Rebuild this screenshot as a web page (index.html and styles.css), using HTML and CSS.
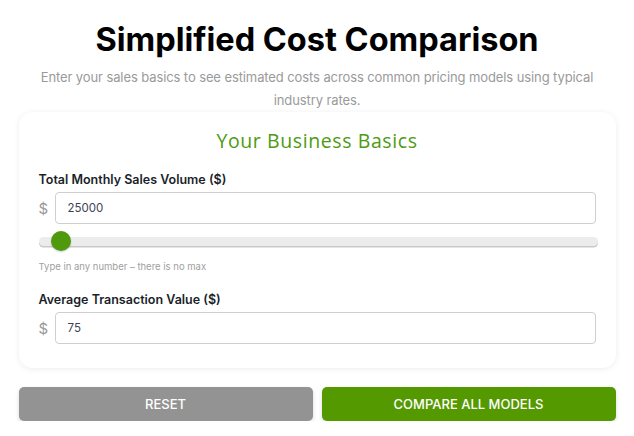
FILE: index.html
```html
<!DOCTYPE html>
<html>
<head>
<meta charset="utf-8">
<link rel="stylesheet" href="styles.css">
</head>
<body>
<div class="page">
  <h1 class="title">Simplified Cost Comparison</h1>
  <p class="subtitle">Enter your sales basics to see estimated costs across common pricing models using typical industry rates.</p>
  <div class="card">
    <h2 class="card-title">Your Business Basics</h2>
    <div class="field">
      <label class="label">Total Monthly Sales Volume ($)</label>
      <div class="input-row">
        <span class="dollar">$</span>
        <div class="input">25000</div>
      </div>
      <div class="slider">
        <div class="track"></div>
        <div class="thumb"></div>
      </div>
      <div class="hint">Type in any number – there is no max</div>
    </div>
    <div class="field field-2">
      <label class="label">Average Transaction Value ($)</label>
      <div class="input-row">
        <span class="dollar">$</span>
        <div class="input">75</div>
      </div>
    </div>
  </div>
  <div class="buttons">
    <button class="btn btn-reset">RESET</button>
    <button class="btn btn-compare">COMPARE ALL MODELS</button>
  </div>
</div>
</body>
</html>
```
FILE: styles.css
```css
* { box-sizing: border-box; }
html, body { margin: 0; padding: 0; background: #fff; }
body { font-family: Inter, "Noto Sans", sans-serif; }
.page {
  width: 597px;
  margin: 0 auto;
  padding-top: 18px;
}
.title {
  margin: 0;
  text-align: center;
  font-family: Inter, sans-serif;
  font-weight: 700;
  font-size: 32.5px;
  line-height: 44px;
  color: #000;
}
.subtitle {
  margin: 4px 0 0;
  text-align: center;
  font-size: 13px;
  line-height: 23px;
  letter-spacing: -0.1px;
  color: #9a9a9a;
}
.card {
  margin-top: 0;
  background: #fff;
  border-radius: 14px;
  box-shadow: 0 1px 6px rgba(0,0,0,0.08);
  padding: 16px 20px 24px;
}
.card-title {
  margin: 0;
  text-align: center;
  font-family: "Open Sans", sans-serif;
  font-weight: 400;
  font-size: 19.5px;
  line-height: 26px;
  letter-spacing: 0.6px;
  color: #4e9a12;
}
.field { margin-top: 18px; }
.field-2 { margin-top: 20px; }
.label {
  display: block;
  font-weight: 600;
  font-size: 12.5px;
  line-height: 16px;
  color: #1b1f2a;
}
.input-row {
  display: flex;
  align-items: center;
  gap: 7px;
  margin-top: 4px;
}
.dollar {
  width: 9px;
  font-size: 15px;
  color: #999;
}
.input {
  flex: 1;
  height: 32px;
  border: 1px solid #cfcfcf;
  border-radius: 4px;
  padding: 0 12px;
  display: flex;
  align-items: center;
  font-size: 11.5px;
  color: #3b4456;
}
.slider {
  position: relative;
  height: 20px;
  margin-top: 7px;
}
.track {
  position: absolute;
  left: 0; right: -2px; top: 6px;
  height: 9px;
  border-radius: 5px;
  background: #ececec;
  box-shadow: 0 1.5px 0 #c9c9c9;
}
.thumb {
  position: absolute;
  left: 12px; top: 0;
  width: 20px; height: 20px;
  border-radius: 50%;
  background: #4f9a0c;
  box-shadow: 0 1px 2px rgba(0,0,0,0.2);
}
.hint {
  margin-top: 10px;
  font-size: 9.5px;
  color: #a0a0a0;
}
.buttons {
  display: grid;
  grid-template-columns: 1fr 1fr;
  gap: 9px;
  margin-top: 19px;
}
.btn {
  height: 34px;
  border: none;
  border-radius: 5px;
  font-family: Inter, sans-serif;
  font-weight: 500;
  font-size: 13px;
  color: #fff;
  box-shadow: 0 2px 4px rgba(0,0,0,0.15);
}
.btn-reset { background: #939393; }
.btn-compare { background: #559900; }
```
